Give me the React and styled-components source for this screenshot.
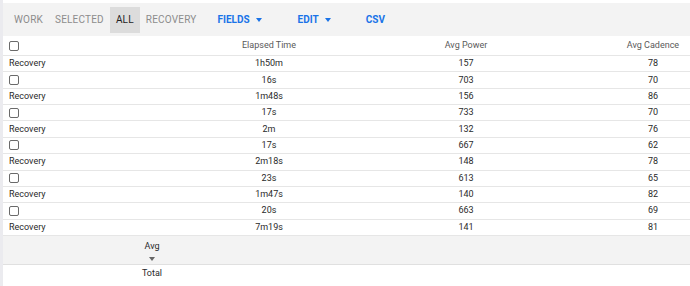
import React from "react";
import styled, { createGlobalStyle } from "styled-components";

const GlobalStyle = createGlobalStyle`
  html, body {
    margin: 0;
    padding: 0;
    background: #ffffff;
    overflow: hidden;
  }
  body {
    font-family: Roboto, "Liberation Sans", Arial, sans-serif;
  }
`;

const Page = styled.div`
  width: 690px;
  height: 286px;
  box-sizing: border-box;
  border-left: 3px solid #ebebef;
  padding-top: 3px;
  overflow: hidden;
`;

const Toolbar = styled.div`
  height: 33px;
  background: #f3f3f3;
  display: flex;
  align-items: center;
  padding-left: 5px;
`;

const FilterButton = styled.div`
  height: 26px;
  display: flex;
  align-items: center;
  padding: 0 6px;
  font-size: 10px;
  letter-spacing: 0.2px;
  color: ${(p) => (p.active ? "#1f1f1f" : "#8c8c8c")};
  background: ${(p) => (p.active ? "#dcdcdc" : "transparent")};
`;

const MenuButton = styled.div`
  display: flex;
  align-items: center;
  gap: 6px;
  margin-left: ${(p) => p.offset}px;
  font-size: 10px;
  font-weight: 700;
  color: #1a73e8;
`;

const Caret = styled.span`
  width: 0;
  height: 0;
  border-left: 3.5px solid transparent;
  border-right: 3.5px solid transparent;
  border-top: 4px solid ${(p) => p.color || "#1a73e8"};
`;

const Table = styled.div`
  width: 740px;
`;

const Row = styled.div`
  display: grid;
  grid-template-columns: 166px 200px 194px 180px;
  height: ${(p) => (p.header ? "19px" : "15.36px")};
  align-items: center;
  border-bottom: 1px solid #e6e6e6;
  font-size: 9px;
  color: ${(p) => (p.header ? "#5a5a5a" : "#2a2a2a")};
`;

const Cell = styled.div`
  text-align: ${(p) => (p.left ? "left" : "center")};
  padding-left: ${(p) => (p.left ? 6 : 0)}px;
  white-space: nowrap;
  line-height: 1;
`;

const Checkbox = styled.span`
  display: inline-block;
  width: 8px;
  height: 8px;
  border: 1px solid #6a6a6a;
  border-radius: 2px;
  vertical-align: middle;
`;

const FooterBar = styled.div`
  background: #f3f3f3;
  border-bottom: 1px solid #e0e0e0;
  height: 28px;
`;

const AvgCol = styled.div`
  width: 298px;
  display: flex;
  flex-direction: column;
  align-items: center;
  padding-top: 6px;
  gap: 6px;
  font-size: 9px;
  line-height: 1;
  color: #2a2a2a;
`;

const Total = styled.div`
  width: 298px;
  text-align: center;
  font-size: 9px;
  color: #2a2a2a;
  padding-top: 3px;
`;

const rows = [
  ["Recovery", "1h50m", "157", "78"],
  [null, "16s", "703", "70"],
  ["Recovery", "1m48s", "156", "86"],
  [null, "17s", "733", "70"],
  ["Recovery", "2m", "132", "76"],
  [null, "17s", "667", "62"],
  ["Recovery", "2m18s", "148", "78"],
  [null, "23s", "613", "65"],
  ["Recovery", "1m47s", "140", "82"],
  [null, "20s", "663", "69"],
  ["Recovery", "7m19s", "141", "81"],
];

const App = () => (
  <Page>
    <GlobalStyle />
    <Toolbar>
      <FilterButton>WORK</FilterButton>
      <FilterButton>SELECTED</FilterButton>
      <FilterButton active>ALL</FilterButton>
      <FilterButton>RECOVERY</FilterButton>
      <MenuButton offset={15}>
        FIELDS <Caret />
      </MenuButton>
      <MenuButton offset={36}>
        EDIT <Caret />
      </MenuButton>
      <MenuButton offset={35}>CSV</MenuButton>
    </Toolbar>
    <Table>
      <Row header>
        <Cell left>
          <Checkbox />
        </Cell>
        <Cell>Elapsed Time</Cell>
        <Cell>Avg Power</Cell>
        <Cell>Avg Cadence</Cell>
      </Row>
      {rows.map((r, i) => (
        <Row key={i}>
          <Cell left>{r[0] ? r[0] : <Checkbox />}</Cell>
          <Cell>{r[1]}</Cell>
          <Cell>{r[2]}</Cell>
          <Cell>{r[3]}</Cell>
        </Row>
      ))}
    </Table>
    <FooterBar>
      <AvgCol>
        Avg
        <Caret color="#666" />
      </AvgCol>
    </FooterBar>
    <Total>Total</Total>
  </Page>
);

export default App;
